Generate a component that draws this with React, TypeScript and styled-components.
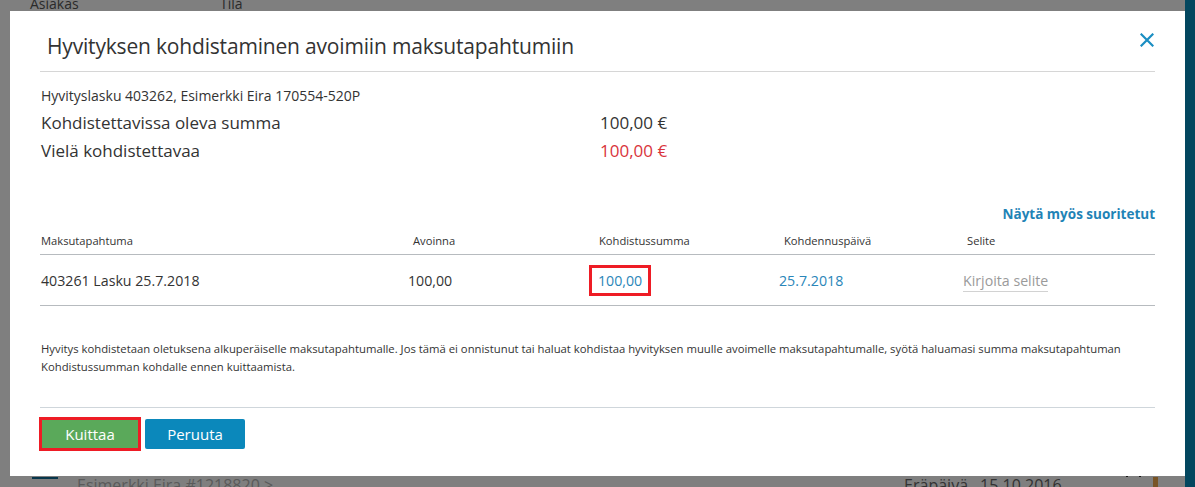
import styled, { createGlobalStyle } from 'styled-components'

const GlobalStyle = createGlobalStyle`
  html, body {
    margin: 0;
    padding: 0;
    background: #ffffff;
    overflow: hidden;
  }
  body {
    font-family: 'Open Sans', 'Noto Sans', sans-serif;
    color: #333333;
  }
  * { box-sizing: border-box; }
`

// ─── Page behind the dialog ──────────────────────────────────────────
const Page = styled.div`
  height: 487px;
  display: flex;
  overflow: hidden;
`

const PageMain = styled.div`
  flex: 1;
  display: flex;
  flex-direction: column;
  justify-content: space-between;
`

const PageSidebar = styled.div`
  width: 10px;
  background: #078fbe;
`

const BgHeaderRow = styled.div`
  display: flex;
  margin-top: -6px;
  padding-left: 30px;
  font-size: 14px;
  line-height: 20px;
  color: #555555;
`

const BgHeaderCell = styled.span<{ $w?: number }>`
  width: ${p => p.$w || 190}px;
`

const BgBottomRow = styled.div`
  display: flex;
  align-items: flex-start;
  height: 13px;
  padding-left: 32px;
  font-size: 16px;
  line-height: 20px;
`

const BgAvatar = styled.div`
  width: 26px;
  height: 2px;
  margin-top: 3px;
  background: #0f6d96;
`

const BgCustomer = styled.span`
  margin-left: 19px;
  color: #b4b4b4;
  margin-top: 1px;
`

const BgDue = styled.span`
  margin-left: 631px;
  color: #666666;
  margin-top: 1px;
  display: flex;
  gap: 12px;
`

const BgDots = styled.span`
  margin-left: 64px;
  margin-top: 1px;
  display: flex;
  gap: 11px;

  &::before, &::after {
    content: '';
    width: 2px;
    height: 2px;
    background: #333333;
  }
`

const BgStatus = styled.div`
  margin-left: 12px;
  width: 5px;
  height: 20px;
  margin-top: 3px;
  background: #f0a94c;
`

// ─── Overlay + dialog ────────────────────────────────────────────────
const Overlay = styled.div`
  position: fixed;
  inset: 0;
  background: rgba(0, 0, 0, 0.5);
  padding: 11px 0 0 10px;
`

const Dialog = styled.div`
  width: 1175px;
  height: 465px;
  background: #ffffff;
  padding: 0 30px;
  display: flex;
  flex-direction: column;
`

const Header = styled.div`
  display: flex;
  align-items: flex-start;
  justify-content: space-between;
  padding: 22px 1px 12px 7px;
  border-bottom: 1px solid #d6d6d6;
`

const Title = styled.h1`
  margin: 0;
  font-size: 21px;
  line-height: 26px;
  font-weight: 400;
  letter-spacing: -0.18px;
  color: #333333;
`

const CloseButton = styled.button`
  border: 0;
  background: none;
  padding: 0;
  width: 14px;
  height: 14px;
  cursor: pointer;
  color: #1a8ec2;
  display: flex;

  svg { width: 14px; height: 14px; }
`

const Summary = styled.div`
  padding-top: 14px;
`

const InvoiceLine = styled.div`
  font-size: 14px;
  line-height: 20px;
  padding-left: 1px;
  margin-bottom: 3px;
`

const SumRow = styled.div`
  display: grid;
  grid-template-columns: 559px auto;
  font-size: 17px;
  line-height: 28px;
  padding-left: 1px;
`

const SumValue = styled.span<{ $due?: boolean }>`
  color: ${p => (p.$due ? '#d9343c' : '#333333')};
`

const ShowPaidLink = styled.a`
  align-self: flex-end;
  margin-top: 39px;
  font-size: 13.5px;
  line-height: 20px;
  font-weight: 700;
  color: #1f83b6;
  text-decoration: none;
  cursor: pointer;
`

const Table = styled.div`
  margin-top: 9px;
`

const gridCols = '367px 190px 181px 184px 1fr'

const HeadRow = styled.div`
  display: grid;
  grid-template-columns: ${gridCols};
  padding: 0 0 5px 1px;
  border-bottom: 1px solid #b7bbbf;
  font-size: 11.2px;
  line-height: 16px;
`

const HeadCell = styled.div<{ $indent: number }>`
  padding-left: ${p => p.$indent}px;
`

const BodyRow = styled.div`
  display: grid;
  grid-template-columns: ${gridCols};
  align-items: center;
  height: 51px;
  padding-left: 1px;
  border-bottom: 1px solid #b7bbbf;
  font-size: 14.2px;
`

const Cell = styled.div<{ $link?: boolean }>`
  color: ${p => (p.$link ? '#2a86b9' : '#333333')};
`

const AmountInput = styled.div`
  margin-left: -9px;
  width: 62px;
  height: 31px;
  border: 3px solid #ee1c25;
  padding-left: 6px;
  display: flex;
  align-items: center;
  color: #2a86b9;
`

const NotePlaceholder = styled.span`
  color: #9a9a9a;
  border-bottom: 1px solid #d2d2d2;
  padding-bottom: 1px;
`

const Note = styled.p`
  margin: 34px 0 0;
  padding-left: 1px;
  font-size: 11.3px;
  line-height: 18px;
  color: #333333;
`

const Footer = styled.div`
  margin-top: 31px;
  border-top: 1px solid #cfd6db;
  padding-top: 9px;
  display: flex;
  align-items: center;
  gap: 4px;
`

const Button = styled.button<{ $variant: 'confirm' | 'cancel' }>`
  height: ${p => (p.$variant === 'confirm' ? 34 : 30)}px;
  width: ${p => (p.$variant === 'confirm' ? 102 : 100)}px;
  margin-left: ${p => (p.$variant === 'confirm' ? -1 : 0)}px;
  border: ${p => (p.$variant === 'confirm' ? '3px solid #ee1c25' : '0')};
  border-radius: ${p => (p.$variant === 'confirm' ? 0 : 2)}px;
  background: ${p => (p.$variant === 'confirm' ? '#5aa95a' : '#0b88bb')};
  color: #ffffff;
  font-family: inherit;
  font-size: 15px;
  cursor: pointer;
  padding: 0;
`

const CloseIcon = () => (
  <svg viewBox="0 0 14 14" fill="none" stroke="currentColor" strokeWidth="2.2" strokeLinecap="square">
    <path d="M1.5 1.5 L12.5 12.5 M12.5 1.5 L1.5 12.5" />
  </svg>
)

const columns = [
  { label: 'Maksutapahtuma', indent: 0 },
  { label: 'Avoinna', indent: 5 },
  { label: 'Kohdistussumma', indent: 1 },
  { label: 'Kohdennuspäivä', indent: 5 },
  { label: 'Selite', indent: 4 },
]

export default function App() {
  return (
    <>
      <GlobalStyle />
      <Page>
        <PageMain>
          <BgHeaderRow>
            <BgHeaderCell $w={190}>Asiakas</BgHeaderCell>
            <BgHeaderCell $w={200}>Tila</BgHeaderCell>
          </BgHeaderRow>
          <BgBottomRow>
            <BgAvatar />
            <BgCustomer>Esimerkki Eira #1218820 &gt;</BgCustomer>
            <BgDue>
              <span>Eräpäivä</span>
              <span>15.10.2016</span>
            </BgDue>
            <BgDots />
            <BgStatus />
          </BgBottomRow>
        </PageMain>
        <PageSidebar />
      </Page>

      <Overlay>
        <Dialog>
          <Header>
            <Title>Hyvityksen kohdistaminen avoimiin maksutapahtumiin</Title>
            <CloseButton aria-label="Sulje">
              <CloseIcon />
            </CloseButton>
          </Header>

          <Summary>
            <InvoiceLine>Hyvityslasku 403262, Esimerkki Eira 170554-520P</InvoiceLine>
            <SumRow>
              <span>Kohdistettavissa oleva summa</span>
              <SumValue>100,00 €</SumValue>
            </SumRow>
            <SumRow>
              <span>Vielä kohdistettavaa</span>
              <SumValue $due>100,00 €</SumValue>
            </SumRow>
          </Summary>

          <ShowPaidLink>Näytä myös suoritetut</ShowPaidLink>

          <Table>
            <HeadRow>
              {columns.map(c => (
                <HeadCell key={c.label} $indent={c.indent}>{c.label}</HeadCell>
              ))}
            </HeadRow>
            <BodyRow>
              <Cell>403261 Lasku 25.7.2018</Cell>
              <Cell>100,00</Cell>
              <Cell>
                <AmountInput>100,00</AmountInput>
              </Cell>
              <Cell $link>25.7.2018</Cell>
              <Cell>
                <NotePlaceholder>Kirjoita selite</NotePlaceholder>
              </Cell>
            </BodyRow>
          </Table>

          <Note>
            Hyvitys kohdistetaan oletuksena alkuperäiselle maksutapahtumalle. Jos tämä ei onnistunut tai haluat kohdistaa hyvityksen muulle avoimelle maksutapahtumalle, syötä haluamasi summa maksutapahtuman
            <br />
            Kohdistussumman kohdalle ennen kuittaamista.
          </Note>

          <Footer>
            <Button $variant="confirm">Kuittaa</Button>
            <Button $variant="cancel">Peruuta</Button>
          </Footer>
        </Dialog>
      </Overlay>
    </>
  )
}
